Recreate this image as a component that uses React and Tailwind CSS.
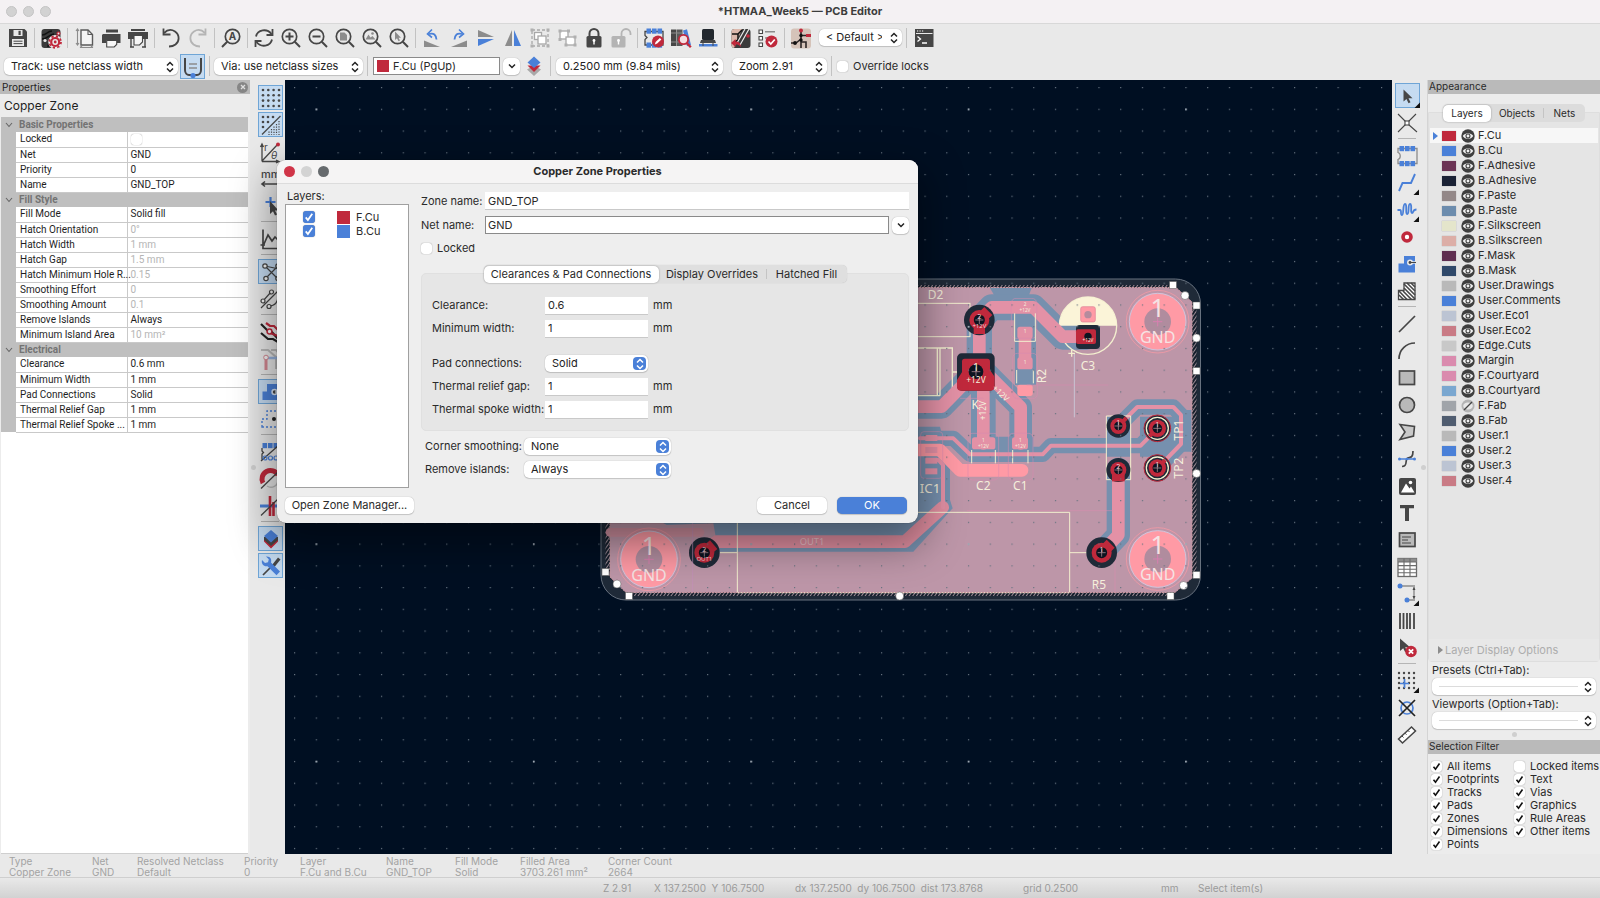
import React from "react";

const D = "#464646";
const B = "#4a80d8";
const R = "#c0293c";
const G = "#8c8c8c";

const line = { fill: "none", stroke: D, strokeWidth: 1.6 };

const magnifier = (
  <g {...line} strokeWidth="1.7">
    <circle cx="10.5" cy="10.5" r="7.2" />
    <path d="M15.8 15.8L21 21" strokeWidth="2" />
  </g>
);

const pads = (y) => (
  <g fill={B}>
    <rect x="4.5" y={y} width="4.6" height="5.2" />
    <rect x="10" y={y} width="4.6" height="5.2" />
    <rect x="15.5" y={y} width="4.6" height="5.2" />
  </g>
);

const board = (
  <g>
    <rect x="2.5" y="3" width="19" height="19" rx="3" fill="#3b3b3b" />
    <path d="M3 9c5 0 5-4 10-4M3 13c6 0 6-4 12-5M9 21c0-5 3-7 7-9" fill="none" stroke="#111" strokeWidth="1.6" />
  </g>
);

const caret = <path d="M22.5 17v6h-6z" fill="#111" transform="translate(1.5 1.5)" />;

const icons = {
  save: (
    <g>
      <path d="M3 3h15.5L21 5.5V21H3z" fill={D} />
      <rect x="7.5" y="4" width="9" height="6" fill="#e9e9e9" />
      <rect x="12.5" y="4.8" width="2.2" height="4.2" fill={D} />
      <rect x="6" y="13" width="12" height="7" fill="#e9e9e9" />
      <path d="M7.5 15.2h9M7.5 17.6h9" stroke={D} strokeWidth="1" />
    </g>
  ),
  setup: (
    <g>
      {board}
      <circle cx="6" cy="14.5" r="1.6" fill="#e9e9e9" />
      <circle cx="16.2" cy="16" r="7" fill="#e9e9e9" />
      <circle cx="16.2" cy="16" r="4" fill="none" stroke={R} strokeWidth="2.2" />
      <circle cx="16.2" cy="16" r="5.8" fill="none" stroke={R} strokeWidth="1.8" strokeDasharray="2.3 2.25" />
      <circle cx="16.2" cy="16" r="1.4" fill={R} />
      <circle cx="19.5" cy="7.5" r="1.5" fill="#e9e9e9" stroke={R} strokeWidth="1.1" />
    </g>
  ),
  page: (
    <g fill="none" stroke={G} strokeWidth="1.1">
      <path d="M9 4h7l4.5 4.5V19H9z" stroke="#5a5a5a" strokeWidth="1.4" fill="#f4f4f4" />
      <path d="M16 4v4.5h4.5" stroke="#5a5a5a" />
      <path d="M5.5 3v16M4 5l1.5-2L7 5M4 17l1.5 2L7 17M8 21.5h13M10 20l-2 1.5M19 20l2 1.5" />
    </g>
  ),
  print: (
    <g fill={D}>
      <rect x="7" y="3.5" width="12" height="3" />
      <path d="M4 8h17.5v9H18v-3H7.5v3H3V9z" />
      <path d="M7.7 14.5h10v4l-2.5 2.5H7.7z" fill="#f7f7f7" stroke={D} strokeWidth="1.1" />
    </g>
  ),
  plot: (
    <g fill={D}>
      <rect x="5" y="3" width="14" height="2" />
      <path d="M2 6h20v7H2z" />
      <path d="M5 13v8M4 21h4M19 13v8M16 21h4" stroke={D} strokeWidth="1.4" />
      <path d="M8 9.5h8.5v6.5l-3 3H8z" fill="#f7f7f7" stroke={D} strokeWidth="1.1" />
    </g>
  ),
  undo: (
    <g {...line} strokeWidth="1.8">
      <path d="M5 7C9 3 13 3.500 16 5.500c5 3.500 4.500 10 .5 13-2 1.500-4 2-6.500 2" />
      <path d="M4.500 2.500v6h7" />
    </g>
  ),
  redo: (
    <g {...line} stroke="#b4b4b4" strokeWidth="1.8">
      <path d="M19 7C15 3 11 3.500 8 5.500c-5 3.500-4.500 10-.5 13 2 1.500 4 2 6.500 2" />
      <path d="M19.500 2.500v6h-7" />
    </g>
  ),
  find: (
    <g>
      <g {...line} strokeWidth="1.7">
        <circle cx="13.5" cy="10.5" r="7.2" />
        <path d="M8.2 15.8L3 21" strokeWidth="2" />
      </g>
      <text x="13.5" y="14" textAnchor="middle" fontSize="10" fontWeight="700" fill={D} fontFamily="Inter, sans-serif">A</text>
    </g>
  ),
  refresh: (
    <g {...line} strokeWidth="1.8">
      <path d="M4 10.500c1.500-7 11-8.500 15.500-2.500M20 13.500c-1.500 7-11 8.500-15.500 2.500" />
      <path d="M20.500 3v6h-6M3.500 21v-6h6" />
    </g>
  ),
  zin: <g>{magnifier}<path d="M10.500 6.500v8M6.500 10.500h8" stroke={D} strokeWidth="2" /></g>,
  zout: <g>{magnifier}<path d="M6.500 10.500h8" stroke={D} strokeWidth="2" /></g>,
  zfit: <g>{magnifier}<path d="M7 6.500h4.500l2.500 2.500v5.500H7z" fill={G} /></g>,
  zobj: <g>{magnifier}<path d="M5.500 13.500l3-5 2 3 2-1.500 3 3.500z" fill={G} /><circle cx="12.5" cy="7.5" r="1.3" fill={G} /></g>,
  zsel: <g>{magnifier}<path d="M8 5.500v8.500l2-1.800 1.500 3 1.500-.8-1.400-2.700h2.400z" fill={G} /></g>,
  rccw: (
    <g>
      <path d="M4 14.500v6.500h16z" fill={G} />
      <path d="M9 8c5-1.500 7 1 7.500 5.500" fill="none" stroke={B} strokeWidth="1.8" />
      <path d="M12 3.500L7.500 8l4.500 3.500" fill="none" stroke={B} strokeWidth="1.6" />
    </g>
  ),
  rcw: (
    <g>
      <path d="M20 14.500v6.500H4z" fill={G} />
      <path d="M15 8c-5-1.500-7 1-7.500 5.500" fill="none" stroke={B} strokeWidth="1.8" />
      <path d="M12 3.500L16.500 8 12 11.500" fill="none" stroke={B} strokeWidth="1.6" />
    </g>
  ),
  mv: <g><path d="M4 4v7h16z" fill={G} /><path d="M4 20v-7h16z" fill={B} /></g>,
  mh: <g><path d="M4 20h7V4z" fill={G} /><path d="M20 20h-7V4z" fill={B} /></g>,
  group: (
    <g fill="#fff" stroke="#a8a8a8" strokeWidth="1.3">
      <rect x="4" y="4" width="16" height="16" fill="none" strokeDasharray="3 2" />
      <rect x="6.5" y="6.5" width="7" height="7" />
      <rect x="10" y="10" width="8" height="8" />
      <path d="M2.500 2.500h3v3h-3zM18.500 2.500h3v3h-3zM2.500 18.500h3v3h-3zM18.500 18.500h3v3h-3z" fill="#b0b0b0" stroke="none" />
    </g>
  ),
  ungroup: (
    <g fill="#fff" stroke="#a8a8a8" strokeWidth="1.3">
      <rect x="5" y="5" width="8" height="8" />
      <rect x="11" y="11" width="9" height="8" />
      <path d="M3.500 3.500h3v3h-3zM12 3.500h3v3h-3zM3.500 12h3v3h-3zM18.500 9.500h3v3h-3zM9.500 17.500h3v3h-3zM18.500 17.500h3v3h-3z" fill="#b0b0b0" stroke="none" />
    </g>
  ),
  lock: (
    <g>
      <path d="M7.500 11V7.500a4.500 4.500 0 019 0V11" fill="none" stroke={D} strokeWidth="2" />
      <rect x="4.5" y="10" width="15" height="11.5" rx="1.5" fill={D} />
      <circle cx="12" cy="14.5" r="1.4" fill="#fff" /><rect x="11.3" y="15" width="1.4" height="3.5" fill="#fff" />
    </g>
  ),
  unlock: (
    <g>
      <path d="M12.500 11V7.500a4.500 4.500 0 019 0V9" fill="none" stroke="#b4b4b4" strokeWidth="1.8" />
      <rect x="2.5" y="10" width="14" height="11.5" rx="1.5" fill="#b4b4b4" />
      <circle cx="9.5" cy="14.5" r="1.4" fill="#fff" /><rect x="8.8" y="15" width="1.4" height="3.5" fill="#fff" />
    </g>
  ),
  fpedit: (
    <g>
      <path d="M3 5.500v4l2 2-2 2v5.500h18V5.500z" fill="none" stroke={D} strokeWidth="1.3" />
      {pads(2.5)}{pads(16.5)}
      <circle cx="16" cy="15.5" r="6" fill={R} />
      <path d="M12.800 18.500l.8-2.600 4.200-4 1.600 1.700-4.200 4z" fill="#fff" />
    </g>
  ),
  fplib: (
    <g>
      <rect x="2" y="3.5" width="5.5" height="16.5" fill={D} /><rect x="8" y="3.5" width="5.5" height="16.5" fill="#5a5a5a" />
      <path d="M2 7h11.500M2 16h11.500" stroke={G} />
      <path d="M14 4.500l4-1.300L22 19l-4 1.300z" fill={B} />
      <circle cx="14.5" cy="13.5" r="4.6" fill="#f4dfe2" stroke={R} strokeWidth="1.8" />
      <path d="M17.800 17l4 4.300" stroke={R} strokeWidth="2.4" />
    </g>
  ),
  update: (
    <g>
      <rect x="6" y="3" width="12" height="11" rx="1.5" fill="#22282e" />
      <path d="M5 14h14l1 3H4z" fill={D} /><rect x="3" y="18" width="18.5" height="2.5" fill={B} />
      <path d="M7 14v6M17 14v6" stroke={D} />
    </g>
  ),
  drcboard: (
    <g>
      <rect x="2.5" y="3" width="19" height="19" rx="3" fill="#3b3b3b" />
      <path d="M2.500 6a3 3 0 013-3H13L5 22a3 3 0 01-2.500-3z" fill="#dcb8ac" />
      <path d="M3 8h6l4-4M9 8v6l-5 3" stroke="#111" strokeWidth="1.5" fill="none" />
      <path d="M20 3l-9 16M16 3L8 17" stroke="#e9e9e9" strokeWidth="1.2" />
      <circle cx="19" cy="10" r="1.8" fill={R} />
      <path d="M2 17l4.500-4v2.500c3 0 5 1 5.500 5.500-2-2-3-2.500-5.500-2.500V21z" fill={R} />
    </g>
  ),
  drc: (
    <g>
      <path d="M3 4h3.500v3.500H3zM3 10.500h3.500V14H3zM3 17h3.500v3.500H3z" fill="#fff" stroke={D} strokeWidth="1.1" />
      <path d="M9 5.700h10M9 12h4" stroke={G} strokeWidth="1.6" />
      <circle cx="15.5" cy="15.5" r="6" fill={R} />
      <path d="M12.500 15.500l2.300 2.500 4-4.500" stroke="#fff" strokeWidth="1.7" fill="none" />
    </g>
  ),
  route: (
    <g>
      <rect x="2" y="2.5" width="20" height="20" rx="3" fill="#d5c3b9" />
      <path d="M12 3v19M12 9.500h9M2 17h5l5-4M12 16h5v6" fill="none" stroke="#2c2626" strokeWidth="1.6" />
      <circle cx="12" cy="4.5" r="2" fill={R} /><rect x="17" y="8" width="5" height="3" fill={R} />
      <circle cx="12" cy="9.5" r="1.7" fill="#111" /><circle cx="6" cy="17" r="1.9" fill="#111" /><circle cx="12" cy="14" r="1.7" fill="#111" />
    </g>
  ),
  term: (
    <g>
      <rect x="3" y="3" width="18.5" height="18" fill={D} />
      <path d="M4 7.500h16.500" stroke="#e9e9e9" /><path d="M5 5h1.200M7.500 5h1.200M10 5h1.200" stroke="#fff" strokeWidth="1.1" />
      <path d="M5.500 10.500l3 2.500-3 2.500M10 17h5" stroke="#fff" strokeWidth="1.3" fill="none" />
    </g>
  ),
  trackw: (
    <g fill="none">
      <path d="M4 3v12c0 3 2 5 4 5h8c2 0 4-2 4-5V3" stroke={D} strokeWidth="2" />
      <path d="M8 9h8M8 13h8" stroke={G} strokeWidth="1.4" />
      <circle cx="12" cy="20.5" r="2.6" fill={B} />
    </g>
  ),
  layers: (
    <g>
      <path d="M12 22l-7-6.500 7-4 7 4z" fill="#a9a9a9" />
      <path d="M12 18l-6.500-6.500h13z" fill={R} />
      <path d="M12 14L5.500 8.500 12 2.500l6.500 6z" fill={B} />
    </g>
  ),
  grid: (
    <g fill={D}>
      {[4, 9.3, 14.6, 20].map((y) => [4, 9.3, 14.6, 20].map((x) => <circle key={x + "-" + y} cx={x} cy={y} r="1.3" />))}
    </g>
  ),
  gridov: (
    <g fill={D}>
      {[[4, 4], [9, 4], [14, 4], [4, 9], [9, 9], [4, 14]].map(([x, y]) => <circle key={x + "-" + y} cx={x} cy={y} r="1.3" />)}
      <path d="M3 21.500L21.500 3" stroke={D} strokeWidth="1.3" />
      <path d="M20 8v14M17.500 11v11M15 13.500v8.500M12.500 16v6M10 18.500v3.500" stroke={D} strokeWidth="1.2" strokeDasharray="1.2 1.4" />
    </g>
  ),
  polar: (
    <g>
      <path d="M4 21.500V4M4 21.500h17M4 21L20 4M2.500 7L4 4l1.500 3M18 20l3 1.500-3 1.500" {...line} strokeWidth="1.3" />
      <circle cx="20" cy="4.5" r="2" fill={R} />
      <text x="6" y="11" fontSize="10" fill={D} fontFamily="Inter, sans-serif">r</text>
      <text x="13" y="19" fontSize="10" fontStyle="italic" fill={D} fontFamily="Inter, sans-serif">θ</text>
    </g>
  ),
  mm: (
    <g>
      <text x="3" y="11" fontSize="11" fontWeight="500" fill={D} fontFamily="Inter, sans-serif">mm</text>
      <path d="M4 17h17M7 14.500L4 17l3 2.500" {...line} strokeWidth="1.6" />
    </g>
  ),
  cursor: (
    <g>
      <path d="M12.500 3v10M7.500 8h10" stroke={B} strokeWidth="2.2" />
      <path d="M12 7v13l3-2.700 2 4.200 2-1-2-4h3.500z" fill={D} />
    </g>
  ),
  chart: <path d="M5 2.500v19h17M2.500 18H7M6 17l4-9 4 6 3-4 4 4" {...line} strokeWidth="1.7" />,
  rats: (
    <g {...line} strokeWidth="1.2">
      <path d="M6 6l14 14M6 19L19 6M6 6l14 3" />
      <g fill="#f7f7f7"><circle cx="6" cy="6" r="2.2" /><circle cx="19" cy="6" r="2.2" /><circle cx="7" cy="18.5" r="2.2" /><circle cx="19" cy="18.5" r="2.2" /></g>
    </g>
  ),
  ratsc: (
    <g {...line} strokeWidth="1.2">
      <path d="M3 21L21 3M5 14l8-9M11 19c7 0 9-5 9-11" />
      <g fill="#f7f7f7"><circle cx="5" cy="14" r="2" /><circle cx="13.5" cy="5" r="2" /><circle cx="11" cy="19.5" r="2" /></g>
    </g>
  ),
  hl: (
    <g fill="none">
      <path d="M3 4l7 7 3 0 8 9M3 13l7 6h5l5 3" stroke="#222" strokeWidth="2.2" />
      <path d="M8 3l4 3h4l6 6M12 13l8 3" stroke={R} strokeWidth="2.2" /><circle cx="11.5" cy="11.5" r="2.4" fill="#fff" stroke={R} strokeWidth="1.5" />
    </g>
  ),
  dim: (
    <g fill="none" opacity=".5">
      <path d="M3 3h7l8 7v12M13 3h5l4 5" stroke={G} strokeWidth="2" />
      <path d="M8 12v11" stroke={R} strokeWidth="3" /><path d="M9 11h13" stroke={B} strokeWidth="2.5" /><circle cx="8" cy="10.5" r="2.3" fill="#fff" stroke={R} />
    </g>
  ),
  zone: (
    <g>
      <path d="M3.500 20V11.500H8V4h13v16z" fill={B} />
      <circle cx="15.5" cy="12" r="3.2" fill="#d9e5f6" /><circle cx="15.5" cy="12" r="1.7" fill={D} /><path d="M16 12h6" stroke="#d9e5f6" strokeWidth="1.3" />
    </g>
  ),
  zoneo: (
    <g>
      <path d="M4 20v-8h5V4h12v16z" fill="none" stroke={B} strokeWidth="1.4" strokeDasharray="2 2" />
      <circle cx="16" cy="12" r="2" fill="#222" />
    </g>
  ),
  padsk: (
    <g>
      {pads(3)}
      <path d="M4 8v3l1.500 1.500L4 14v6M3 21L21 5" fill="none" stroke={D} strokeWidth="1.3" />
      <g fill="none" stroke={B} strokeWidth="1.2"><circle cx="7" cy="18" r="2" /><circle cx="12.5" cy="18" r="2" /><circle cx="18" cy="18" r="2" /></g>
    </g>
  ),
  viask: (
    <g fill="none">
      <path d="M5 16a8 8 0 0115-8" stroke={R} strokeWidth="5" /><path d="M9 19a7 7 0 0011-6" stroke="#bbb" strokeWidth="1.5" /><path d="M3 21.500L21 4" stroke={D} strokeWidth="1.3" />
    </g>
  ),
  tracksk: (
    <g fill="none">
      <path d="M2 12h20" stroke={B} strokeWidth="3" /><path d="M12 2v20M15.500 8v14" stroke={R} strokeWidth="2.6" /><path d="M3 21.500L21 4" stroke={D} strokeWidth="1.3" />
    </g>
  ),
  hc: (
    <g>
      <path d="M12 21.500l-7-7v-3l7 5 7-5v3z" fill={R} /><path d="M12 19l-7-6v-3h14v3z" fill={D} /><path d="M12 15.500L5 9l7-6 7 6z" fill={B} />
    </g>
  ),
  tools: (
    <g>
      <path d="M4 21L14 11" stroke={D} strokeWidth="1.7" /><path d="M13 11l6-7.500 2.500 2L15.500 13z" fill={D} />
      <path d="M3 6l3 3 3-.8.800-3L7 2.500C11 2 13 5 12 8.500l9 9-3.500 3.700-9-9C5 13 2 10 3 6z" fill={B} />
    </g>
  ),
  arrow: <g><path d="M7.500 5.500v12l3-2.600 2 4.300 2-1-2-4h4z" fill={D} />{caret}</g>,
  local: (
    <g {...line} strokeWidth="1.1"><path d="M3 3l7.500 7.500M13.500 13.500L22 21M21 3l-7.500 7.500M10.500 13.500L3 21" /><rect x="10" y="10" width="4" height="4" fill="#fff" /></g>
  ),
  fp: <g><path d="M3 4.500v4c3 1 3 6 0 7v4h19v-15z" fill="none" stroke={G} strokeWidth="1.3" />{pads(2)}{pads(17)}</g>,
  track: <g><path d="M4 20l3.500-8H16l4-9" fill="none" stroke={B} strokeWidth="1.9" />{caret}</g>,
  tune: <g><path d="M2.500 12H5c2 0 0 5 2 5s.5-11 3-11 0 10 2.300 10 .2-10 2.700-10 0 9 2 9 0-3.500 4.500-3.500" fill="none" stroke={B} strokeWidth="1.8" />{caret}</g>,
  via: <circle cx="12" cy="12" r="4" fill="#fff" stroke={R} strokeWidth="3.6" />,
  addzone: <g><path d="M3.500 20.500V11.500H9V4h11v16.500z" fill={B} /><circle cx="15" cy="10.5" r="3" fill="#e9e9e9" /><path d="M15 10.500h6" stroke="#e9e9e9" strokeWidth="2.4" /><path d="M15 10.500h6" stroke={D} strokeWidth="1" /><circle cx="15" cy="10.5" r="1.4" fill={D} /></g>,
  rule: (
    <g>
      <path d="M3.500 20.500V11.500H9V4h11v16.500z" fill="#fff" stroke={D} strokeWidth="1.3" />
      <path d="M9 5l11 11M12 4l8 8M16 4l4 4M9 9l11 11M4 12l8 8.500M4 16l4.500 4.500M8 12l8.500 8.500" stroke={D} strokeWidth="1.6" />
    </g>
  ),
  ln: <path d="M4 20L20 4" {...line} strokeWidth="1.7" />,
  arc: <path d="M4 20C4 11 11 4 20 4" {...line} strokeWidth="1.7" />,
  rect: <rect x="4.5" y="5" width="15" height="13.5" fill="#b9b9b9" stroke={D} strokeWidth="1.7" />,
  circ: <circle cx="12" cy="12" r="7.5" fill="#b9b9b9" stroke={D} strokeWidth="1.7" />,
  poly: <path d="M5 4.500l14.500 2-1 9.500L5 19.500l5-7.500z" fill="#c9c9c9" stroke={D} strokeWidth="1.6" />,
  bez: <g><path d="M7 19.500c6 0 3-6 5-8s6 1 6-7.500" {...line} strokeWidth="1.7" /><path d="M4 12h16" stroke={B} strokeWidth="1.5" /><circle cx="4.5" cy="12" r="1.5" fill={B} /><circle cx="19.5" cy="12" r="1.5" fill={B} /><circle cx="12" cy="12" r="1.3" fill={B} /></g>,
  img: <g><rect x="4" y="4" width="17" height="17" rx="2" fill={D} /><path d="M6 18.500l5-9 3.500 5 1.500-2 3.500 6z" fill="#fff" /><circle cx="15.5" cy="8.5" r="1.8" fill="#fff" /></g>,
  text: <path d="M5 4h14v3.300h-5V20h-4V7.300H5z" fill={D} />,
  tbox: <g><rect x="4.5" y="5" width="15.5" height="13.5" fill="#b9b9b9" stroke={D} strokeWidth="1.7" /><path d="M7 9h9M7 12h6M7 15h9" stroke={D} /></g>,
  table: <g><rect x="3" y="3.5" width="18.5" height="18" fill="#fff" stroke="#6b6b6b" strokeWidth="1.3" /><rect x="3" y="3.5" width="18.5" height="3.5" fill={G} /><path d="M9 3.500v18M15 3.500v18M3 7h18M3 10.600h18M3 14.200h18M3 17.800h18" stroke="#6b6b6b" strokeWidth="1.1" /></g>,
  dimn: <g><path d="M5 4h15M11 18h9M19 5v12" stroke={G} strokeWidth="1.4" /><path d="M17.500 8L19 5l1.500 3zM17.500 14l1.500 3 1.500-3z" fill={D} /><circle cx="5" cy="4" r="2.5" fill={B} /><circle cx="12" cy="18" r="2.5" fill={B} />{caret}</g>,
  bar: <path d="M5 4v16M8.500 4v16M12 4v16M15 4v16M19 4v16" stroke={D} strokeWidth="1.8" />,
  del: <g><path d="M5 2.500v12.500l3.200-2.700 2 4 2-1-2-4H15z" fill={D} /><circle cx="16" cy="15.5" r="5.8" fill={R} /><path d="M13.800 13.300l4.400 4.400M18.200 13.300l-4.400 4.400" stroke="#fff" strokeWidth="1.7" /></g>,
  origin: <g><g fill={D}>{[4, 9, 14, 19].map((y) => [4, 9, 14, 19].map((x) => <circle key={x + "-" + y} cx={x} cy={y} r="1.2" />))}</g><path d="M9.500 10v9M5 14.500h9" stroke={B} strokeWidth="1.7" />{caret}</g>,
  drill: <g><circle cx="12" cy="12" r="6" fill="none" stroke={B} strokeWidth="1.7" /><path d="M4 4l16 16M20 4L4 20" stroke="#222" strokeWidth="1.7" /></g>,
  ruler: <g><path d="M3.500 16L16.500 4l4 4-13 12z" fill="#fff" stroke={D} strokeWidth="1.5" /><path d="M7 13l1.500 1.500M10 10.200l1.500 1.500M13 7.500l1.500 1.500" stroke={D} /></g>,
};

function Icon({ name }) {
  return <svg viewBox="0 0 24 24" className="block size-6 shrink-0">{icons[name]}</svg>;
}

function ToolButton({ name, on }) {
  return (
    <button aria-label={name} className={on ? "grid size-[25px] place-items-center border border-[#6fa5d6] bg-[#c5dbf1]" : "grid size-[25px] place-items-center"}>
      <Icon name={name} />
    </button>
  );
}

function VBar({ items }) {
  return (
    <div className="flex flex-col items-center gap-[2px]">
      {items.map((it, i) =>
        it === "|" ? <div key={i} className="my-px h-[2px] w-[18px] border-t border-[#b5b5b5]" />
          : <ToolButton key={i} name={it.replace("*", "")} on={it.endsWith("*")} />
      )}
    </div>
  );
}

const Sep = () => <div className="h-5 w-px shrink-0 bg-[#c2c2c2]" />;

function Chevrons() {
  return (
    <svg viewBox="0 0 8 12" className="h-3 w-2" fill="none" stroke="currentColor" strokeWidth="1.5">
      <path d="M1 4.500L4 1.500l3 3M1 7.500l3 3 3-3" />
    </svg>
  );
}

function Select({ label, value, className, blue, id }) {
  return (
    <div className={"relative " + className}>
      <select id={id} aria-label={label} className="block h-[17px] w-full appearance-none rounded-[5px] bg-white pr-5 pl-[7px] text-[11px] leading-[17px] text-[#222] shadow-[0_0_1px_rgba(0,0,0,0.35),0_1px_1px_rgba(0,0,0,0.15)]">
        <option>{value}</option>
      </select>
      {blue ? (
        <span className="pointer-events-none absolute top-[2px] right-[2px] grid size-[13px] place-items-center rounded-[4px] bg-[#4a80d8] text-white"><Chevrons /></span>
      ) : (
        <span className="pointer-events-none absolute top-[3px] right-1 text-[#222]"><Chevrons /></span>
      )}
    </div>
  );
}

function Check({ label, checked, blue, className = "" }) {
  return (
    <label className={"flex items-center gap-[5px] text-[11px] leading-[13px] text-[#2a2a2a] " + className}>
      <span className="grid">
        <input type="checkbox" aria-label={label || "Locked"} defaultChecked={checked} className={(blue ? "size-3 bg-[#4a80d8] " : "size-[11px] bg-white ") + "appearance-none rounded-[3px] shadow-[0_0_1px_rgba(0,0,0,0.5)] [grid-area:1/1]"} />
        {checked && (
          <svg viewBox="0 0 11 11" className={(blue ? "size-3 text-white " : "size-[11px] text-[#111] ") + "pointer-events-none [grid-area:1/1]"} fill="none" stroke="currentColor" strokeWidth="1.6">
            <path d="M2.500 5.800l2 2.400L8.500 2.500" />
          </svg>
        )}
      </span>
      {label && <span className="whitespace-nowrap">{label}</span>}
    </label>
  );
}

const groups = [
  ["Basic Properties", [["Locked", null], ["Net", "GND"], ["Priority", "0"], ["Name", "GND_TOP"]]],
  ["Fill Style", [["Fill Mode", "Solid fill"], ["Hatch Orientation", "0°", 1], ["Hatch Width", "1 mm", 1], ["Hatch Gap", "1.5 mm", 1], ["Hatch Minimum Hole R...", "0.15", 1], ["Smoothing Effort", "0", 1], ["Smoothing Amount", "0.1", 1], ["Remove Islands", "Always"], ["Minimum Island Area", "10 mm²", 1]]],
  ["Electrical", [["Clearance", "0.6 mm"], ["Minimum Width", "1 mm"], ["Pad Connections", "Solid"], ["Thermal Relief Gap", "1 mm"], ["Thermal Relief Spoke ...", "1 mm"]]],
];

function Properties() {
  return (
    <aside className="flex w-[250px] shrink-0 flex-col bg-[#ececec]">
      <div className="flex h-[14px] items-center justify-between bg-[#bababa] px-[2px] text-[10px] text-[#1e1e1e]">
        <span>Properties</span>
        <button aria-label="Close" className="grid size-[11px] place-items-center rounded-full bg-[#868686] text-[#dedede]">
          <svg viewBox="0 0 8 8" className="size-2" stroke="currentColor" strokeWidth="1.3"><path d="M2 2l4 4M6 2L2 6" /></svg>
        </button>
      </div>
      <h2 className="h-[23px] pl-1 text-[12px] leading-[23px] text-[#1e1e1e]">Copper Zone</h2>
      <div className="mr-[2px] ml-px flex-1 border-b border-[#cfcfcf] bg-white">
        <table className="w-full table-fixed border-collapse font-['Roboto',sans-serif] text-[10px] leading-[14px] text-[#1e1e1e]">
          <colgroup><col className="w-[15px]" /><col className="w-[111px]" /><col /></colgroup>
          {groups.map(([title, rows]) => (
            <tbody key={title}>
              <tr className="h-[15px] bg-[#bfbfbf]">
                <td className="p-0 pl-1 text-[#666]">
                  <svg viewBox="0 0 8 8" className="size-2" fill="none" stroke="currentColor" strokeWidth="1.1"><path d="M1 2l3 3.500L7 2" /></svg>
                </td>
                <th colSpan="2" className="p-0 pl-[3px] text-left font-bold text-[#737373]">{title}</th>
              </tr>
              {rows.map(([k, v, dim]) => (
                <tr key={k} className="h-[15px]">
                  <td className="bg-[#bfbfbf] p-0" />
                  <td className="border-r border-b border-[#c9c9c9] p-0 pl-1 whitespace-nowrap">{k}</td>
                  <td className={dim ? "border-b border-[#c9c9c9] p-0 pl-[3px] text-[#b5b5b5]" : "border-b border-[#c9c9c9] p-0 pl-[3px]"}>
                    {v === null ? <Check className="h-3" /> : v}
                  </td>
                </tr>
              ))}
            </tbody>
          ))}
        </table>
      </div>
    </aside>
  );
}

const PINK = "#bd96a8";
const BLUE = "#7690ae";
const TRK = "#e391a6";
const LP = "#ff9aa5";
const SILK = "#f3efcf";
const DK = "#1f2a38";

function GndPad({ x, y }) {
  return (
    <g textAnchor="middle" fill="#f5e3e4">
      <circle cx={x} cy={y} r="94" fill="none" stroke={LP} strokeWidth="2" />
      <circle cx={x} cy={y} r="85" fill={LP} stroke="#cfc6dd" strokeWidth="3" />
      <circle cx={x} cy={y} r="40" fill="#b08c9e" />
      <path d={`M${x} ${y - 14}v28M${x - 14} ${y}h28`} stroke="#d77fb0" strokeWidth="3" />
      <text x={x} y={y - 14} fontSize="76">1</text>
      <text x={x} y={y + 64} fontSize="48">GND</text>
    </g>
  );
}

function Hole({ x, y, r = 46, inner = 30, n, net, ring, dirs = [], w = 38 }) {
  return (
    <g textAnchor="middle" fill="#f2cfd3">
      <circle cx={x} cy={y} r={r} fill={DK} stroke={ring ? R : "none"} strokeWidth="3" />
      {ring && <circle cx={x} cy={y} r={r - 7} fill="none" stroke={SILK} strokeWidth="4" />}
      <circle cx={x} cy={y} r={inner} fill={R} />
      {dirs.map(([dx, dy]) => <path key={dx + "-" + dy} d={`M${x} ${y}l${dx} ${dy}`} stroke={R} strokeWidth={w} />)}
      <circle cx={x} cy={y} r={r * 0.36} fill="#0c1420" />
      <path d={`M${x} ${y - 12}v24M${x - 12} ${y}h24`} stroke="#c8a0a8" strokeWidth="2" />
      <text x={x} y={y - 3} fontSize="22">{n}</text>
      {net && <text x={x} y={y + 24} fontSize="18">{net}</text>}
    </g>
  );
}

function Canvas() {
  const halo = { fill: "none", stroke: BLUE, strokeLinejoin: "round", strokeLinecap: "round" };
  const trk = { fill: "none", stroke: TRK, strokeLinejoin: "round", strokeLinecap: "round" };
  const a = "M238 150L275 112H400L488 200H560";
  const c = "M228 305L125 410H-200";
  const e = "M250 300L362 412V520";
  const f = "M60 505H160L210 553H428L453 527H722L770 478";
  const tp = "M655 468L712 411H820L843 435V522L772 595";
  const g = "M655 598V795L605 848";
  const out = "M128 712L15 815H-550L-590 848";
  return (
    <svg className="block size-full bg-[#000f22]" fontFamily='"Noto Sans", sans-serif'>
      <defs>
        <pattern id="dots" x="9" y="7" width="21.74" height="21.74" patternUnits="userSpaceOnUse"><rect width="1.2" height="1.2" fill="#66727f" /></pattern>
        <pattern id="dotsMajor" x="30.5" y="28.5" width="217.4" height="217.4" patternUnits="userSpaceOnUse"><rect width="1.7" height="1.7" fill="#aab3bd" /></pattern>
        <pattern id="hatch" width="3" height="3" patternUnits="userSpaceOnUse" patternTransform="rotate(35)"><rect width="3" height="3" fill="#161f2c" /><rect width="1" height="3" fill="#9a8a94" /></pattern>
      </defs>
      <g transform="translate(-285 -80)">
        <rect x="601" y="279" width="599.5" height="321" rx="25" fill={DK} stroke="#68727f" />
        <path d="M629 285H1173L1196.500 305.500V575L1170.500 596H629L605.500 572V305Z" fill="url(#hatch)" />
        <path d="M625 287.500H1176L1192 302V578L1175 592.500H626L610 577V302Z" fill={PINK} />
        <g transform="translate(900 270) scale(0.333333)">
          <path d="M270 54H395L385 80H285Z" fill={BLUE} />
          <path d="M-900 470H120L150 580V690L158 715L40 845H-545L-560 760L-700 765L-740 740H-900Z" fill={BLUE} />
          <path d="M-870 787H-600" stroke="#cf8f9f" strokeWidth="26" strokeLinecap="round" />
          <g {...halo}>
            <path d={a} strokeWidth="78" /><path d="M238 150V305" strokeWidth="76" /><path d={c} strokeWidth="72" />
            <path d="M250 330V530" strokeWidth="74" /><path d={e} strokeWidth="68" /><path d={f} strokeWidth="46" />
            <path d={tp} strokeWidth="46" /><path d={g} strokeWidth="70" />
          </g>
          <path d="M620 440H690V560H620ZM843 420H875V545H800ZM720 440H830V560H720Z" fill={BLUE} />
          <path d="M345 140H408V345H345Z" fill={BLUE} />
          <path d="M215 500H400V560H215Z" fill={BLUE} />
          <path d="M478 167H600V230H520Z" fill={BLUE} />
          <rect x="50" y="100" width="160" height="100" fill="none" stroke={SILK} strokeWidth="3" />
          <path d="M-300 234H157V375M-300 377H120M112 236V377M120 236V377M157 306H182" fill="none" stroke={SILK} strokeWidth="4" />
          <circle cx="564" cy="167" r="86" fill="none" stroke={SILK} strokeWidth="4" />
          <path d="M478 167A86 86 0 01650 167Z" fill="#fbf4d8" />
          <g {...trk} strokeWidth="38">
            <path d={a} /><path d="M238 150V305" /><path d={c} /><path d="M250 330V520" /><path d={e} /><path d={g} />
            <path d="M375 190V275" /><path d={out} stroke="#e08ea0" />
            <path d={f} strokeWidth="12" /><path d={tp} strokeWidth="12" /><path d="M90 570H115L129 585V712" strokeWidth="12" />
            <path d="M50 540H120L180 601H366" stroke={LP} />
          </g>
          <g fill={LP}>
            <rect x="352" y="344" width="46" height="34" rx="8" />
            <g fill={TRK}><rect x="352" y="170" width="46" height="36" rx="8" /><rect x="352" y="262" width="46" height="36" rx="8" /><rect x="216" y="502" width="70" height="36" rx="8" /><rect x="336" y="502" width="48" height="36" rx="8" />
              {[495, 531, 563, 595].map((y) => <rect key={y} x="76" y={y} width="36" height="18" />)}</g>
          </g>
          <g fill="none" stroke="#d98cb0" strokeWidth="2" opacity=".8">
            <rect x="334" y="85" width="76" height="120" rx="14" /><rect x="338" y="250" width="74" height="136" rx="14" />
            <rect x="204" y="490" width="92" height="140" rx="14" /><rect x="325" y="490" width="74" height="140" rx="14" />
            <rect x="62" y="485" width="66" height="140" rx="10" /><path d="M380 345H625M200 722H640M645 840V970M180 385H250" />
          </g>
          <g stroke={SILK} strokeWidth="3" fill="none">
            <path d="M344 130V214H406V130M350 300V340M400 300V340M215 540V580M286 540V580M338 540V580M384 540V580M619 438H692V629H619ZM-488 727H509V968H-488ZM509 848H562M-541 848H-488" />
            <path d="M523 250V442" stroke="#c9c4d4" /><path d="M505 250H525M515 240V260" strokeWidth="4" />
          </g>
          <Hole x={238} y={150} n="2" net="+12V" dirs={[[27, -27], [0, 42]]} w={34} />
          <rect x="171" y="250" width="113" height="112" rx="14" fill={DK} /><rect x="186" y="266" width="84" height="84" rx="8" fill={R} />
          <path d="M171 330L190 300H270L284 320V350Q284 362 270 362H184Q171 362 171 350Z" fill={R} />
          <circle cx="228" cy="305" r="22" fill="#0c1420" />
          <path d="M228 292v26M215 305h26" stroke="#c8a0a8" strokeWidth="2" />
          <rect x="528" y="165" width="72" height="72" rx="12" fill={DK} /><rect x="528" y="178" width="60" height="44" rx="6" fill={R} /><circle cx="564" cy="199" r="11" fill="#0c1420" />
          <rect x="542" y="110" width="44" height="46" rx="6" fill={LP} stroke="#dd7f96" strokeWidth="2" /><circle cx="564" cy="134" r="11" fill="#b58b9d" />
          <Hole x={655} y={468} r={35} inner={24} n="1" dirs={[[24, -24]]} w={12} />
          <Hole x={655} y={600} r={36} inner={24} n="2" dirs={[[0, 34]]} />
          <Hole x={772} y={475} r={40} inner={26} n="1" ring dirs={[[-24, 24]]} w={12} />
          <Hole x={772} y={594} r={40} inner={26} n="1" ring dirs={[[24, -24]]} w={12} />
          <Hole x={605} y={848} n="1" dirs={[[27, -27]]} w={34} />
          <GndPad x={773} y={155} /><GndPad x={773} y={867} />
          <GndPad x={-753} y={868} />
          <Hole x={-587} y={848} n="2" net="OUT1" dirs={[[28, -24]]} w={34} />
          <g fill="#f5efdc" textAnchor="middle" fontSize="36">
            <text x="107" y="88">D2</text><text x="564" y="300">C3</text><text x="250" y="660">C2</text><text x="361" y="660">C1</text>
            <text x="90" y="668" fontSize="40">IC1</text><text x="597" y="958">R5</text>
            <text x="226" y="417">K</text>
            <text transform="translate(438 318) rotate(-90)">R2</text><text transform="translate(850 594) rotate(-90)">TP2</text>
            <text transform="translate(850 480) rotate(-90)">TP1</text>
            <g fontSize="25"><text x="228" y="338">+12V</text><text transform="translate(259 422) rotate(-90)">+12V</text><text transform="translate(296 376) rotate(45)">+12V</text></g>
            <text x="228" y="302" fontSize="34">1</text>
            <g fontSize="14"><text x="375" y="107">2</text><text x="375" y="125">+12V</text><text x="250" y="533">+12V</text><text x="361" y="533">+12V</text><text x="250" y="517">1</text><text x="361" y="517">1</text><text x="564" y="216">+12V</text><text x="375" y="190">1</text><text x="375" y="282">1</text></g>
            <text x="-264" y="825" fontSize="28" fill="#e9c2ca">OUT1</text>
          </g>
          <path d="M-622 690V970" stroke="#c48fbb" strokeWidth="2" />
        </g>
        <path d="M625 287.500H1176L1192 302V578L1175 592.500H626L610 577V302Z" fill="none" stroke="#c9969f" strokeDasharray="2 1" />
        <g fill="#fff">
          {[[1173, 285], [1196.5, 305.5], [1196.5, 371], [1196.5, 575], [1170.5, 596], [629, 596], [605.5, 572]].map(([x, y]) => <rect key={x + "-" + y} x={x - 3.5} y={y - 3.5} width="7" height="7" stroke="#555" strokeWidth=".5" />)}
          {[[1185, 295.5], [1196.5, 338], [1196.5, 473.5], [1183.5, 585.5], [617, 584], [899.7, 596]].map(([x, y]) => <circle key={x + "-" + y} cx={x} cy={y} r="4" stroke="#555" strokeWidth=".5" />)}
        </g>
      </g>
      <rect width="100%" height="100%" fill="url(#dots)" />
      <rect width="100%" height="100%" fill="url(#dotsMajor)" />
    </svg>
  );
}

const layers = [
  ["F.Cu", "#c0293c"], ["B.Cu", "#4a80d8"], ["F.Adhesive", "#6b3354"], ["B.Adhesive", "#1b2235"], ["F.Paste", "#938888"], ["B.Paste", "#6c8cad"],
  ["F.Silkscreen", "#e4e5cb"], ["B.Silkscreen", "#dcaea7"], ["F.Mask", "#5f2e50"], ["B.Mask", "#30496a"], ["User.Drawings", "#b9b9b9"], ["User.Comments", "#4a80d8"],
  ["User.Eco1", "#bcc4d3"], ["User.Eco2", "#c97b85"], ["Edge.Cuts", "#c8c8c8"], ["Margin", "#da8bae"], ["F.Courtyard", "#da8bae"], ["B.Courtyard", "#7aa7d0"],
  ["F.Fab", "#a0a4a9"], ["B.Fab", "#505d70"], ["User.1", "#b9b9b9"], ["User.2", "#4a80d8"], ["User.3", "#bcc4d3"], ["User.4", "#c97b85"],
];

function Eye({ off }) {
  return off ? (
    <svg viewBox="0 0 14 14" className="size-[14px]"><circle cx="7" cy="7" r="6.5" fill="#b4b4b4" /><ellipse cx="7" cy="7" rx="4.8" ry="3.4" fill="#e8e8e8" /><path d="M3 11l8-8" stroke="#444" strokeWidth="1.3" /></svg>
  ) : (
    <svg viewBox="0 0 14 14" className="size-[14px]"><circle cx="7" cy="7" r="6.7" fill="#3f3f3f" /><path d="M1.800 7C4 3.200 10 3.200 12.200 7 10 10.800 4 10.800 1.800 7z" fill="#f2f2f2" /><circle cx="7" cy="7" r="2" fill="#f2f2f2" stroke="#3f3f3f" strokeWidth="1.1" /></svg>
  );
}

function PanelSelect({ label }) {
  return (
    <label className="block text-[11px] leading-4 text-[#2a2a2a]">
      {label}
      <span className="relative block">
        <select className="block h-[17px] w-full appearance-none rounded-[5px] bg-white shadow-[0_0_1px_rgba(0,0,0,0.35),0_1px_1px_rgba(0,0,0,0.15)]" />
        <span className="pointer-events-none absolute top-2 right-[18px] left-[7px] h-px bg-[#dcdcdc]" />
        <span className="pointer-events-none absolute top-[3px] right-1 text-[#222]"><Chevrons /></span>
      </span>
    </label>
  );
}

function Appearance() {
  return (
    <aside className="flex w-[173px] shrink-0 flex-col border-l border-[#d4d4d4] bg-[#ececec] text-[11px] text-[#2a2a2a]">
      <h2 className="h-[14px] bg-[#bababa] pl-px text-[10px] leading-[13px]">Appearance</h2>
      <div className="mt-[18px] flex h-[550px] flex-col rounded-b-[4px] border border-[#dedede] bg-[#e5e5e5]">
        <div className="-mt-[9px] flex h-[18px] justify-center">
          <div className="flex items-center rounded-[5px] bg-[#dcdcdc] text-[10px]">
            <button className="h-[17px] w-12 rounded-[5px] bg-white shadow-[0_0_2px_rgba(0,0,0,0.35)]">Layers</button>
            <button className="w-[53px] border-r border-[#c4c4c4] leading-[10px]">Objects</button>
            <button className="w-[41px]">Nets</button>
          </div>
        </div>
        <ul className="mt-[6px] flex-1 px-px">
          {layers.map(([name, color], i) => (
            <li key={name} className={i === 0 ? "flex h-[15px] items-center bg-[#f7f7f7]" : "flex h-[15px] items-center"}>
              <span className="w-3 pl-[3px]">{i === 0 && <svg viewBox="0 0 5 8" className="h-2 w-[5px]"><path d="M0 0l5 4-5 4z" fill={B} /></svg>}</span>
              <span className="h-[10px] w-[14px] shadow-[0_0_1px_rgba(0,0,0,0.3)]" style={{ background: color }} />
              <button aria-label={"Toggle " + name} className="mr-[3px] ml-[5px]"><Eye off={name === "F.Fab"} /></button>
              <span>{name}</span>
            </li>
          ))}
        </ul>
        <button className="flex h-[22px] items-center gap-[2px] bg-[#e8e8e8] pl-[9px] text-[#adadad]">
          <svg viewBox="0 0 5 8" className="h-2 w-[5px]"><path d="M0 0l5 4-5 4z" fill={G} /></svg>
          Layer Display Options
        </button>
      </div>
      <div className="flex flex-col gap-px px-1">
        <PanelSelect label="Presets (Ctrl+Tab):" />
        <PanelSelect label="Viewports (Option+Tab):" />
      </div>
      <div className="grid h-[11px] place-items-center"><span className="size-[5px] rounded-full bg-[#cfcfcf]" /></div>
      <h2 className="h-[14px] bg-[#bababa] pl-px text-[10px] leading-[13px]">Selection Filter</h2>
      <div className="mt-[6px] grid grid-flow-col grid-cols-[83px_1fr] grid-rows-7 pl-[3px]">
        {["All items", "Footprints", "Tracks", "Pads", "Zones", "Dimensions", "Points"].map((t) => <Check key={t} label={t} checked />)}
        {["Locked items", "Text", "Vias", "Graphics", "Rule Areas", "Other items"].map((t, i) => <Check key={t} label={t} checked={i > 0} />)}
      </div>
    </aside>
  );
}

function Field({ id, label, value, select }) {
  return (
    <div className="flex h-[23px] items-center">
      <label htmlFor={id} className="w-[113px] whitespace-nowrap">{label}</label>
      {select ? <Select id={id} label={label} value={value} blue className="w-[103px]" /> : (
        <>
          <input id={id} defaultValue={value} className="h-[18px] w-[103px] border-b border-[#c9c9c9] bg-white px-[3px]" />
          <span className="pl-[5px]">mm</span>
        </>
      )}
    </div>
  );
}

const dlgBtn = "h-[17px] rounded-[5px] shadow-[0_0_1px_rgba(0,0,0,0.35),0_1px_1px_rgba(0,0,0,0.15)]";

function Dialog() {
  return (
    <section role="dialog" aria-label="Copper Zone Properties" className="absolute top-[160px] left-[277px] w-[641px] rounded-[9px] bg-[#eeeeee] text-[11px] text-[#2a2a2a] shadow-[0_0_1px_rgba(0,0,0,0.6),0_16px_40px_6px_rgba(0,0,0,0.4)]">
      <header className="flex h-6 items-center rounded-t-[9px] border-b border-[#dcdcdc] bg-[#f5f4f4] px-[7px]">
        <div className="flex w-[60px] gap-[6px]">
          <button aria-label="Close" className="size-[11px] rounded-full bg-[#d03548]" />
          <button aria-label="Minimize" className="size-[11px] rounded-full bg-[#d3d3d3]" />
          <button aria-label="Zoom" className="size-[11px] rounded-full bg-[#666a6d]" />
        </div>
        <h1 className="flex-1 text-center text-[11px] font-bold">Copper Zone Properties</h1>
        <div className="w-[60px]" />
      </header>
      <div className="flex pt-1 pr-[9px] pl-2">
        <div className="flex w-[124px] flex-col">
          <span className="h-4 pl-[2px] leading-4">Layers:</span>
          <ul className="h-[284px] border border-[#a0a0a0] bg-white pt-[5px]">
            {[["F.Cu", R], ["B.Cu", B]].map(([n, c]) => (
              <li key={n} className="flex h-[14px] items-center pl-[17px]">
                <Check label="" checked blue />
                <span className="mr-[6px] ml-[22px] size-[13px]" style={{ background: c }} />
                {n}
              </li>
            ))}
          </ul>
        </div>
        <div className="ml-3 flex-1 pt-1">
          <div className="flex h-[18px] items-center">
            <label htmlFor="zn" className="w-16 whitespace-nowrap">Zone name:</label>
            <input id="zn" defaultValue="GND_TOP" className="h-[18px] flex-1 border-b border-[#c9c9c9] bg-white px-[3px]" />
          </div>
          <div className="mt-[6px] flex h-[18px] items-center">
            <label htmlFor="nn" className="w-16 whitespace-nowrap">Net name:</label>
            <input id="nn" defaultValue="GND" className="h-[18px] flex-1 border border-[#8a8a8a] bg-white px-[2px]" />
            <button aria-label="Show nets" className={dlgBtn + " ml-[3px] grid w-[17px] place-items-center bg-white"}>
              <svg viewBox="0 0 8 8" className="size-2" fill="none" stroke="#222" strokeWidth="1.5"><path d="M1 2.500l3 3 3-3" /></svg>
            </button>
          </div>
          <Check label="Locked" className="mt-2" />
          <div className="mt-[18px] h-[158px] rounded-[5px] border border-[#e0e0e0] bg-[#e6e6e6] px-[10px]">
            <div className="-mt-[9px] flex h-[18px] justify-center">
              <div className="flex items-center rounded-[5px] bg-[#dfdfdf] shadow-[0_0_1px_rgba(0,0,0,0.2)]">
                <button className="h-[17px] w-[175px] rounded-[5px] bg-white shadow-[0_0_2px_rgba(0,0,0,0.35)]">Clearances &amp; Pad Connections</button>
                <button className="w-[108px] border-r border-[#c4c4c4] leading-[10px]">Display Overrides</button>
                <button className="w-[80px]">Hatched Fill</button>
              </div>
            </div>
            <div className="mt-[11px]">
              <Field id="cl" label="Clearance:" value="0.6" />
              <Field id="mw" label="Minimum width:" value="1" />
              <div className="mt-3">
                <Field id="pc" label="Pad connections:" value="Solid" select />
                <Field id="tg" label="Thermal relief gap:" value="1" />
                <Field id="ts" label="Thermal spoke width:" value="1" />
              </div>
            </div>
          </div>
          <div className="mt-1 pl-1">
            {[["cs", "Corner smoothing:", "None"], ["ri", "Remove islands:", "Always"]].map(([id, l, v]) => (
              <div key={id} className="flex h-[23px] items-center">
                <label htmlFor={id} className="w-[99px] whitespace-nowrap">{l}</label>
                <Select id={id} label={l} value={v} blue className="w-[147px]" />
              </div>
            ))}
          </div>
        </div>
      </div>
      <footer className="flex gap-[10px] px-2 pt-[9px] pr-[11px] pb-[9px]">
        <button className={dlgBtn + " mr-auto w-[129px] bg-white whitespace-nowrap"}>Open Zone Manager...</button>
        <button className={dlgBtn + " w-[70px] bg-white"}>Cancel</button>
        <button className={dlgBtn + " w-[70px] bg-[#4a80d8] text-white"}>OK</button>
      </footer>
    </section>
  );
}

const topItems = ["save", "|", "setup", "|", "page", "print", "plot", "|", "undo", "redo", "|", "find", "|", "refresh", "zin", "zout", "zfit", "zobj", "zsel", "|", "rccw", "rcw", "mv", "mh", "group", "ungroup", "lock", "unlock", "|", "fpedit", "fplib", "update", "|", "drcboard", "drc", "|", "route"];

const info = [["Type", "Copper Zone", "w-[83px]"], ["Net", "GND", "w-[45px]"], ["Resolved Netclass", "Default", "w-[107px]"], ["Priority", "0", "w-[56px]"], ["Layer", "F.Cu and B.Cu", "w-[86px]"], ["Name", "GND_TOP", "w-[69px]"], ["Fill Mode", "Solid", "w-[65px]"], ["Filled Area", "3703.261 mm²", "w-[88px]"], ["Corner Count", "2664", "w-[90px]"]];

export default function App() {
  return (
    <div className="relative flex h-screen flex-col overflow-hidden bg-[#e9e9e9] font-['Inter',sans-serif] text-[11px] text-[#2a2a2a]">
      <header className="flex h-6 shrink-0 items-center border-b border-[#d8d8d8] bg-[#f4f1f3] px-[6px]">
        <div className="flex w-20 gap-[6px]">
          {["Close", "Minimize", "Zoom"].map((t) => <button key={t} aria-label={t} className="size-[11px] rounded-full border border-[#c4c4c4] bg-[#d2d2d2]" />)}
        </div>
        <h1 className="flex-1 text-center text-[11px] font-bold text-[#3c3c3c]">*HTMAA_Week5 — PCB Editor</h1>
        <div className="w-20" />
      </header>
      <div className="flex h-[27px] shrink-0 items-center pl-1">
        {topItems.map((it, i) => it === "|" ? <div key={i} className="flex w-[6px] justify-center"><Sep /></div> : <div key={i} className="flex w-[27px] justify-center"><ToolButton name={it} /></div>)}
        <Select label="Tuning profile" value="< Default >" className="ml-[5px] w-[83px]" />
        <div className="flex w-[9px] justify-center"><Sep /></div>
        <ToolButton name="term" />
      </div>
      <div className="flex h-[29px] shrink-0 items-center pt-px pl-1">
        <Select label="Track width" value="Track: use netclass width" className="w-[174px]" />
        <div className="mr-[4px] ml-[2px] flex"><ToolButton name="trackw" on /></div>
        <Sep />
        <Select label="Via size" value="Via: use netclass sizes" className="mx-1 w-[149px]" />
        <Sep />
        <button className="ml-[5px] flex h-[18px] w-[127px] items-center gap-1 border border-[#8a8a8a] bg-white pl-[3px]">
          <span className="size-3 bg-[#c0293c]" />F.Cu (PgUp)
        </button>
        <button aria-label="Choose layer" className={dlgBtn + " ml-[3px] grid w-[17px] place-items-center bg-white"}>
          <svg viewBox="0 0 8 8" className="size-2" fill="none" stroke="#222" strokeWidth="1.5"><path d="M1 2.500l3 3 3-3" /></svg>
        </button>
        <div className="mr-1 ml-px flex"><ToolButton name="layers" /></div>
        <Sep />
        <Select label="Grid" value="0.2500 mm (9.84 mils)" className="ml-[5px] w-[167px]" />
        <Select label="Zoom level" value="Zoom 2.91" className="mr-1 ml-[9px] w-[95px]" />
        <Sep />
        <Check label="Override locks" className="ml-[5px]" />
      </div>
      <main className="flex min-h-0 flex-1">
        <Properties />
        <div className="flex w-[7px] shrink-0 items-center justify-center"><span className="size-[5px] rounded-full bg-[#cfcfcf]" /></div>
        <div className="w-7 shrink-0 pt-[5px] pr-[2px]">
          <VBar items={["grid*", "gridov*", "polar", "mm", "cursor", "|", "chart", "|", "rats*", "ratsc", "|", "hl", "dim", "|", "zone*", "zoneo", "|", "padsk", "viask", "tracksk", "|", "hc*", "tools*"]} />
        </div>
        <div className="min-w-0 flex-1"><Canvas /></div>
        <div className="w-7 shrink-0 pt-[3px] pl-[2px]">
          <VBar items={["arrow*", "local", "|", "fp", "track", "tune", "via", "addzone", "rule", "|", "ln", "arc", "rect", "circ", "poly", "bez", "img", "text", "tbox", "table", "dimn", "bar", "del", "|", "origin", "drill", "ruler"]} />
        </div>
        <div className="flex w-[7px] shrink-0 items-center justify-center"><span className="size-[5px] rounded-full bg-[#cfcfcf]" /></div>
        <Appearance />
      </main>
      <div className="flex h-6 shrink-0 border-b border-[#cfcfcf] pt-[2px] pl-[9px] text-[10px] leading-[11px] text-[#a3a3a3]">
        {info.map(([k, v, w]) => <div key={k} className={w + " shrink-0 whitespace-nowrap"}><div>{k}</div><div>{v}</div></div>)}
      </div>
      <footer className="flex h-5 shrink-0 items-center bg-linear-to-b from-[#e9e9e9] to-[#d2d2d2] pt-px pl-[603px] text-[10px] whitespace-pre text-[#9a9a9a]">
        <span className="w-[51px]">Z 2.91</span>
        <span className="w-[141px]">X 137.2500  Y 106.7500</span>
        <span className="w-[228px]">dx 137.2500  dy 106.7500  dist 173.8768</span>
        <span className="w-[138px]">grid 0.2500</span>
        <span className="w-[37px]">mm</span>
        <span>Select item(s)</span>
      </footer>
      <Dialog />
    </div>
  );
}
